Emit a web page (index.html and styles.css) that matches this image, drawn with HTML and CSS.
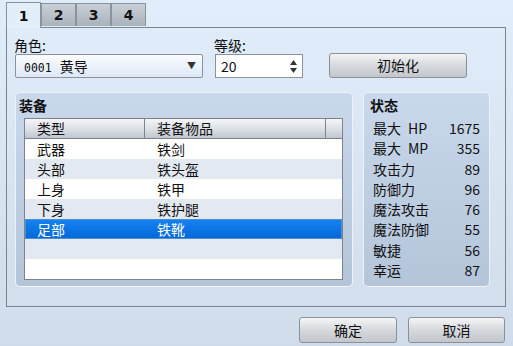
FILE: index.html
```html
<!DOCTYPE html>
<html>
<head>
<meta charset="utf-8">
<link rel="stylesheet" href="styles.css">
</head>
<body>
<div class="window">
  <div class="tabs">
    <div class="tab active">1</div>
    <div class="tab">2</div>
    <div class="tab">3</div>
    <div class="tab">4</div>
  </div>
  <div class="pane">
    <div class="top-row">
      <div class="field actor">
        <div class="label">角色:</div>
        <div class="select"><span class="mono">0001</span><span class="name">黄导</span><span class="arrow">▼</span></div>
      </div>
      <div class="field level">
        <div class="label">等级:</div>
        <div class="spin"><span>20</span>
          <span class="spin-btns">
            <svg width="7" height="5" viewBox="0 0 7 5"><path d="M3.5 0L7 5H0z" fill="#333"/></svg>
            <svg width="7" height="5" viewBox="0 0 7 5"><path d="M0 0H7L3.5 5z" fill="#333"/></svg>
          </span>
        </div>
      </div>
      <div class="btn init">初始化</div>
    </div>
    <div class="groups">
      <div class="group equip">
        <div class="group-title">装备</div>
        <div class="list">
          <div class="list-head">
            <div class="c1">类型</div><div class="c2">装备物品</div><div class="c3"></div>
          </div>
          <div class="row"><div class="c1">武器</div><div class="c2">铁剑</div></div>
          <div class="row alt"><div class="c1">头部</div><div class="c2">铁头盔</div></div>
          <div class="row"><div class="c1">上身</div><div class="c2">铁甲</div></div>
          <div class="row alt"><div class="c1">下身</div><div class="c2">铁护腿</div></div>
          <div class="row sel"><div class="c1">足部</div><div class="c2">铁靴</div></div>
          <div class="row alt"></div>
          <div class="row"></div>
        </div>
      </div>
      <div class="group status">
        <div class="group-title">状态</div>
        <div class="stat"><span>最大&ensp;HP</span><span>1675</span></div>
        <div class="stat"><span>最大&ensp;MP</span><span>355</span></div>
        <div class="stat"><span>攻击力</span><span>89</span></div>
        <div class="stat"><span>防御力</span><span>96</span></div>
        <div class="stat"><span>魔法攻击</span><span>76</span></div>
        <div class="stat"><span>魔法防御</span><span>55</span></div>
        <div class="stat"><span>敏捷</span><span>56</span></div>
        <div class="stat"><span>幸运</span><span>87</span></div>
      </div>
    </div>
  </div>
  <div class="footer">
    <div class="btn ok">确定</div>
    <div class="btn cancel">取消</div>
  </div>
</div>
</body>
</html>
```
FILE: styles.css
```css
* { box-sizing: border-box; }
html, body { margin: 0; padding: 0; }
body {
  font-family: "Noto Sans CJK SC", "Noto Sans", sans-serif;
  font-size: 14px;
  color: #111;
}
.window {
  width: 513px;
  height: 346px;
  background: linear-gradient(#e1edfb, #d0dce9);
  overflow: hidden;
}
.tabs {
  display: flex;
  align-items: flex-end;
  height: 27px;
  padding-left: 6px;
}
.tab {
  width: 35px;
  height: 23px;
  margin-bottom: 1px;
  border: 1px solid #8a929c;
  border-bottom: none;
  background: linear-gradient(#c9d0d8, #a9b1ba);
  text-align: center;
  font-family: "DejaVu Sans", sans-serif;
  font-weight: bold;
  font-size: 14px;
  line-height: 22px;
  color: #111;
}
.tab.active {
  height: 26px;
  margin-bottom: -1px;
  background: #e3eefb;
  position: relative;
  z-index: 1;
  line-height: 26px;
}
.pane {
  margin-left: 6px;
  width: 500px;
  height: 280px;
  border: 1px solid #7c848e;
  padding: 9px 0 0 8px;
}
.top-row {
  display: flex;
  align-items: flex-end;
}
.label {
  height: 17px;
  line-height: 17px;
  color: #111;
  margin-left: -1px;
}
.actor { width: 188px; }
.level { width: 88px; margin-left: 12px; }
.select {
  height: 24px;
  border: 1px solid #8a929c;
  border-radius: 2px;
  background: linear-gradient(#fafcff, #dde9f7);
  line-height: 22px;
  padding-left: 8px;
  position: relative;
}
.mono { font-family: "DejaVu Sans Mono", monospace; font-size: 11.5px; }
.name { margin-left: 8px; }
.arrow {
  position: absolute;
  right: 6px;
  top: 0;
  font-size: 9px;
  color: #333;
}
.spin {
  height: 24px;
  border: 1px solid #8a929c;
  background: #fff;
  line-height: 22px;
  padding-left: 5px;
  display: flex;
  justify-content: space-between;
}
.spin-btns {
  display: flex;
  flex-direction: column;
  justify-content: center;
  gap: 3px;
  padding-right: 5px;
}
.spin-btns svg { display: block; }
.btn {
  border: 1px solid #8a9098;
  border-radius: 3px;
  background: linear-gradient(#f4f5f6, #d6d9dd 50%, #c3c7cc);
  text-align: center;
  color: #111;
}
.init {
  width: 138px;
  height: 25px;
  line-height: 23px;
  margin-left: 26px;
}
.groups {
  display: flex;
  margin-top: 14px;
  gap: 10px;
}
.group {
  height: 195px;
  border: 1px solid #eef3fa;
  border-radius: 5px;
  background: linear-gradient(#c9d8eb, #b4c5da);
}
.equip { width: 338px; padding: 0 0 0 8px; }
.status { width: 127px; padding: 0 9px 0 9px; }
.group-title {
  font-weight: bold;
  height: 25px;
  line-height: 24px;
}
.equip .group-title { margin-left: -5px; }
.status .group-title { margin-left: -3px; }
.list {
  width: 319px;
  height: 162px;
  border: 1px solid #7c838c;
  background: #fff;
}
.list-head {
  display: flex;
  height: 20px;
  line-height: 19px;
  background: linear-gradient(#f4f6f8, #d8dde3 60%, #bfc6ce);
  border-bottom: 1px solid #7c838c;
}
.c1 { width: 120px; padding-left: 12px; }
.c2 { flex: 1; padding-left: 12px; }
.list-head .c1 { border-right: 1px solid #7c838c; }
.list-head .c2 { border-right: 1px solid #7c838c; }
.list-head .c3 { width: 16px; }
.row {
  display: flex;
  height: 20px;
  line-height: 20px;
}
.row .c1 { width: 120px; }
.row.alt { background: #e3e9f0; }
.row.sel {
  background: linear-gradient(#1582f0, #0568d8);
  color: #fff;
  border: 1px solid #4e8ed0;
  line-height: 18px;
}
.row.sel .c1 { width: 119px; padding-left: 11px; }
.stat {
  display: flex;
  justify-content: space-between;
  height: 20.3px;
  line-height: 20px;
}
.footer {
  display: flex;
  justify-content: flex-end;
  gap: 11px;
  padding-right: 8px;
  margin-top: 10px;
}
.ok, .cancel {
  width: 98px;
  height: 26px;
  line-height: 24px;
}
.cancel { width: 97px; }
```
